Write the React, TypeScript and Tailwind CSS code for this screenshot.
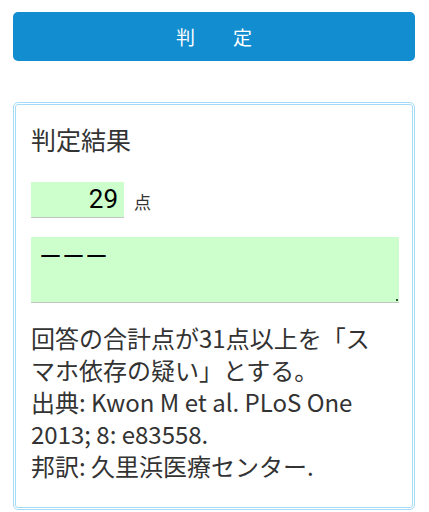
import React from "react";

export default function App() {
  const jp = { fontFamily: '"Noto Sans CJK JP", "Noto Sans", sans-serif' } as React.CSSProperties;
  return (
    <div className="w-[429px] h-[512px] bg-white overflow-hidden" style={jp}>
      <div className="pt-[12px] pl-[13px] pr-[14px]">
        <div className="h-[49px] rounded-[5px] bg-[#128dcf] flex items-center justify-center text-white text-[19px] leading-none">
          判　　定
        </div>
        <div className="mt-[41px] h-[408px] rounded-[5px] border-[3px] border-double border-[#a6dbf8] pl-[15px] pr-[13px] pt-[16px]">
          <div className="text-[25px] leading-[36px] text-[#333]">判定結果</div>
          <div className="mt-[25px] flex items-center">
            <div className="w-[93px] h-[36px] bg-[#ccffcc] border-b border-[#c4c4c4] flex items-center justify-end pr-[6px] text-[26px] text-black" style={{ fontFamily: 'Roboto, "Noto Sans", sans-serif' }}>
              29
            </div>
            <div className="ml-[10px] mt-[2px] text-[17px] text-[#333] leading-none">点</div>
          </div>
          <div className="relative mt-[19px] h-[66px] bg-[#ccffcc] border-b border-[#c4c4c4] pl-[8px] pt-[2px] text-[23px] leading-[32px] text-black">
            ーーー
            <div className="absolute right-[1px] bottom-[1px] w-[2px] h-[2px] bg-[#335533]"></div>
          </div>
          <div className="mt-[19px] text-[24px] leading-[32px] text-[#333]">
            回答の合計点が31点以上を「ス
            <br />
            マホ依存の疑い」とする。
            <br />
            出典: Kwon M et al. PLoS One
            <br />
            2013; 8: e83558.
            <br />
            邦訳: 久里浜医療センター.
          </div>
        </div>
      </div>
    </div>
  );
}
